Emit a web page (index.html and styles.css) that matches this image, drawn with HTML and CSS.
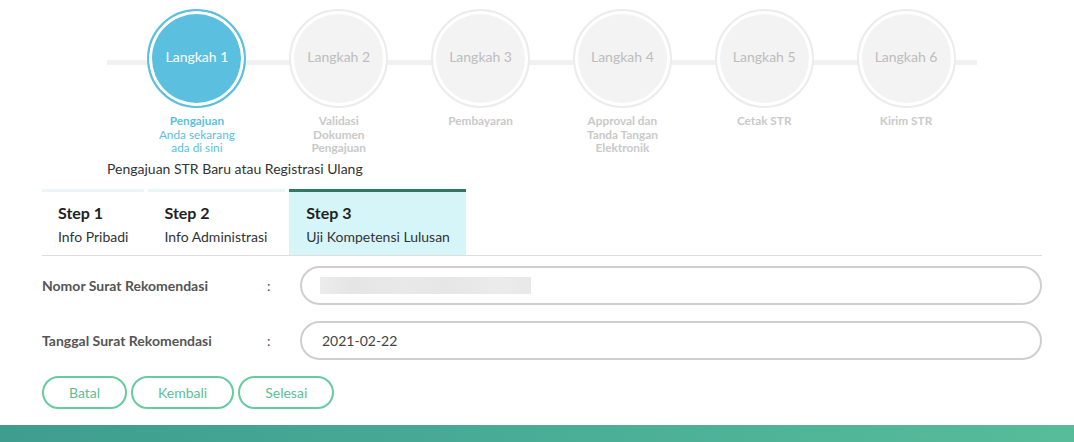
FILE: index.html
```html
<!DOCTYPE html>
<html lang="id">
<head>
<meta charset="utf-8">
<title>Pengajuan STR</title>
<link rel="stylesheet" href="styles.css">
</head>
<body>
<div class="page">
  <div class="stepper">
    <div class="steps">
      <div class="step active">
        <div class="circle">Langkah 1</div>
        <div class="label"><b>Pengajuan</b><br>Anda sekarang ada di sini</div>
      </div>
      <div class="step">
        <div class="circle">Langkah 2</div>
        <div class="label"><b>Validasi Dokumen Pengajuan</b></div>
      </div>
      <div class="step">
        <div class="circle">Langkah 3</div>
        <div class="label"><b>Pembayaran</b></div>
      </div>
      <div class="step">
        <div class="circle">Langkah 4</div>
        <div class="label"><b>Approval dan Tanda Tangan Elektronik</b></div>
      </div>
      <div class="step">
        <div class="circle">Langkah 5</div>
        <div class="label"><b>Cetak STR</b></div>
      </div>
      <div class="step">
        <div class="circle">Langkah 6</div>
        <div class="label"><b>Kirim STR</b></div>
      </div>
    </div>
    <div class="heading">Pengajuan STR Baru atau Registrasi Ulang</div>
  </div>

  <div class="tabs">
    <div class="tab">
      <div class="tab-title">Step 1</div>
      <div class="tab-sub">Info Pribadi</div>
    </div>
    <div class="tab">
      <div class="tab-title">Step 2</div>
      <div class="tab-sub">Info Administrasi</div>
    </div>
    <div class="tab current">
      <div class="tab-title">Step 3</div>
      <div class="tab-sub">Uji Kompetensi Lulusan</div>
    </div>
  </div>

  <div class="form">
    <div class="f-label">Nomor Surat Rekomendasi</div>
    <div class="f-colon">:</div>
    <div class="f-input"><span class="blurred"></span></div>

    <div class="f-label">Tanggal Surat Rekomendasi</div>
    <div class="f-colon">:</div>
    <div class="f-input">2021-02-22</div>
  </div>

  <div class="buttons">
    <button class="btn">Batal</button>
    <button class="btn">Kembali</button>
    <button class="btn">Selesai</button>
  </div>
</div>
<div class="footer"></div>
</body>
</html>
```

FILE: styles.css
```css
* { box-sizing: border-box; }

body {
  margin: 0;
  font-family: Lato, "Open Sans", "Liberation Sans", sans-serif;
  color: #333;
  background: #fff;
}

.page {
  padding: 0 32px 0 42px;
}

.stepper {
  margin-left: 65px;
  width: 870px;
}

.steps {
  display: flex;
  align-items: flex-start;
  padding: 9px 0 0 19px;
  background: linear-gradient(#f1f1f1, #f1f1f1) no-repeat;
  background-size: 100% 5px;
  background-position: 0 60px;
}

.step {
  width: 142px;
  display: flex;
  flex-direction: column;
  align-items: center;
}

.circle {
  width: 99px;
  height: 99px;
  border-radius: 50%;
  border: 2px solid #ececec;
  box-shadow: inset 0 0 0 3px #fff;
  background: #f3f3f3;
  color: #bdbdbd;
  font-size: 14px;
  display: flex;
  align-items: center;
  justify-content: center;
  padding-bottom: 5px;
}

.step.active .circle {
  border-color: #5bbfdf;
  background: #5bbfdf;
  color: #fff;
}

.label {
  width: 84px;
  margin-top: 6px;
  text-align: center;
  font-size: 11.8px;
  line-height: 13.5px;
  color: #c9c9c9;
}

.label b { font-weight: 700; }

.step.active .label { color: #5bbfdf; }

.heading {
  margin-top: 4px;
  font-size: 14px;
  line-height: 20px;
  color: #333;
}

.tabs {
  display: flex;
  gap: 4px;
  margin-top: 10px;
  border-bottom: 1px solid #dedede;
}

.tab {
  padding: 10px 16px 7px;
  border-top: 3px solid #eaf6f5;
}

.tab:nth-child(2) { padding-right: 18px; }

.tab.current {
  background: #d5f5f9;
  border-top-color: #2c7a62;
  padding-left: 17px;
}

.tab-title {
  font-size: 16px;
  font-weight: 700;
  line-height: 22px;
  color: #222;
  margin-bottom: 2px;
}

.tab-sub {
  font-size: 14px;
  line-height: 22px;
  color: #333;
}

.form {
  display: grid;
  grid-template-columns: 224px 34px 1fr;
  row-gap: 16px;
  align-items: center;
  margin-top: 10px;
}

.f-label {
  font-size: 14px;
  font-weight: 700;
  color: #555;
}

.f-colon {
  font-size: 14px;
  color: #555;
  padding-left: 1px;
}

.f-input {
  height: 39px;
  border: 2px solid #cfcfcf;
  border-radius: 20px;
  padding: 0 20px;
  display: flex;
  align-items: center;
  font-size: 14px;
  color: #444;
}

.blurred {
  display: inline-block;
  width: 211px;
  height: 17px;
  margin-left: -2px;
  background: linear-gradient(90deg, #ececec 0%, #e5e5e5 15%, #e9e9e9 40%, #e6e6e6 60%, #ebebeb 85%, #e8e8e8 100%);
  filter: blur(0.6px);
}

.buttons {
  display: flex;
  gap: 4px;
  margin-top: 16px;
}

.btn {
  height: 33px;
  padding: 0 25px;
  border: 2px solid #66cc9e;
  border-radius: 17px;
  background: #fff;
  color: #5cbf95;
  font-family: Lato, "Open Sans", sans-serif;
  font-size: 14px;
}

.footer {
  margin-top: 16px;
  height: 40px;
  background: linear-gradient(90deg, #3e9d8f 0%, #48ab96 45%, #57bc99 100%);
}
```
